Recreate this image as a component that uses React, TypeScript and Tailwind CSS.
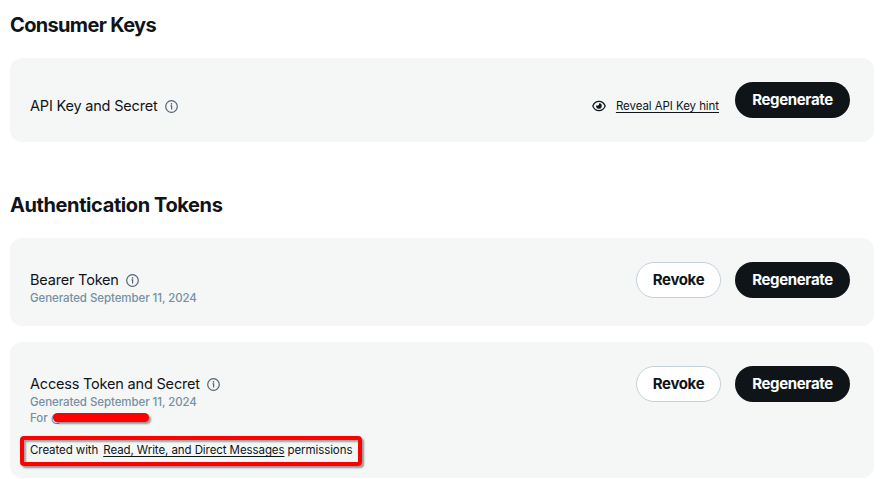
import type { ReactNode } from 'react';

function InfoIcon() {
  return (
    <svg className="block h-[13px] w-[13px] shrink-0" viewBox="0 0 13 13" fill="none">
      <circle cx="6.5" cy="6.5" r="5.8" stroke="#536476" strokeWidth="1.2" />
      <circle cx="6.5" cy="3.9" r="0.8" fill="#536476" />
      <path d="M5.5 5.9H6.6V9.6" stroke="#536476" strokeWidth="1.2" />
    </svg>
  );
}

function EyeIcon() {
  return (
    <svg className="block h-[12px] w-[14px] shrink-0" viewBox="0 0 14 12" fill="none">
      <path
        d="M0.8 6C2 3 4.2 1.3 7 1.3S12 3 13.2 6C12 9 9.8 10.7 7 10.7S2 9 0.8 6Z"
        stroke="#0f1419"
        strokeWidth="1.25"
      />
      <path
        d="M7 3.3C7.4 4.3 6.9 5.4 5.8 5.6C5.1 5.7 4.6 5.5 4.4 5.1A2.75 2.75 0 1 0 7 3.3Z"
        fill="#0f1419"
      />
    </svg>
  );
}

function Regenerate() {
  return (
    <button className="flex h-9 w-[115px] items-center justify-center rounded-full bg-[#0f1419] text-[15px] leading-5 font-bold tracking-[-0.35px] text-white">
      Regenerate
    </button>
  );
}

function Revoke() {
  return (
    <button className="flex h-9 w-[85px] items-center justify-center rounded-full border border-[#c4d1da] bg-white text-[15px] leading-5 font-bold tracking-[-0.35px] text-[#0f1419]">
      Revoke
    </button>
  );
}

function Label({ children }: { children: ReactNode }) {
  return (
    <div className="flex h-5 items-center gap-[7px] text-[14.5px] leading-5 tracking-[-0.19px]">
      <span>{children}</span>
      <span className="pt-px">
        <InfoIcon />
      </span>
    </div>
  );
}

function Generated() {
  return (
    <p className="h-4 text-[11.5px] leading-4 font-medium tracking-[-0.08px] text-[#7590a3]">
      Generated September 11, 2024
    </p>
  );
}

export default function App() {
  return (
    <main className="flex h-[479px] w-[880px] flex-col overflow-hidden bg-white pr-1.5 pl-2.5 font-['Inter','Liberation_Sans',sans-serif] whitespace-nowrap text-[#0f1419]">
      <h2 className="mt-[13px] h-6 shrink-0 text-[20px] leading-6 font-bold tracking-[-0.66px]">
        Consumer Keys
      </h2>
      <section className="mt-[21px] flex h-[84px] shrink-0 items-start justify-between rounded-xl bg-[#f5f7f7] pt-6 pr-6 pl-5">
        <div className="pt-3.5">
          <Label>API Key and Secret</Label>
        </div>
        <div className="flex">
          <div className="mt-4 mr-4 flex h-4 items-center gap-[10px]">
            <EyeIcon />
            <a className="text-[11.5px] leading-4 tracking-[-0.07px] underline decoration-1 underline-offset-2">
              Reveal API Key hint
            </a>
          </div>
          <Regenerate />
        </div>
      </section>
      <h2 className="mt-[51px] h-6 shrink-0 text-[20px] leading-6 font-bold tracking-[-0.4px]">
        Authentication Tokens
      </h2>
      <section className="mt-[21px] flex h-[88px] shrink-0 items-start justify-between rounded-xl bg-[#f5f7f7] pt-6 pr-6 pl-5">
        <div className="pt-2">
          <Label>Bearer Token</Label>
          <Generated />
        </div>
        <div className="flex gap-3.5">
          <Revoke />
          <Regenerate />
        </div>
      </section>
      <section className="mt-4 flex h-[136px] shrink-0 items-start justify-between rounded-xl bg-[#f5f7f7] pt-6 pr-6 pl-5">
        <div className="pt-2">
          <Label>Access Token and Secret</Label>
          <Generated />
          <div className="flex h-4 items-center text-[11.5px] leading-4 font-medium tracking-[-0.08px] text-[#7590a3]">
            <span className="w-[17px]">For</span>
            <span className="relative ml-1 block h-4 w-[100px]">
              <span className="absolute top-0 left-0">@</span>
              <span className="absolute top-[3px] left-[2px] h-[9px] w-[96px] rounded-full bg-[#fe0000] shadow-[2px_2px_2px_rgba(0,0,0,0.4)]" />
            </span>
          </div>
          <div className="mt-2.5 -ml-2.5 flex h-[30px] w-[342px] items-center rounded-[4px] border-4 border-[#fe0000] pb-0.5 pl-1.5 text-[11.5px] leading-4 tracking-[-0.08px] shadow-[2px_2px_2px_rgba(0,0,0,0.4),inset_2px_2px_2px_rgba(0,0,0,0.35)]">
            <span className="mr-[5px]">Created with</span>
            <a className="mr-[3px] underline decoration-1 underline-offset-2">Read, Write, and Direct Messages</a>
            <span>permissions</span>
          </div>
        </div>
        <div className="flex gap-3.5">
          <Revoke />
          <Regenerate />
        </div>
      </section>
    </main>
  );
}
